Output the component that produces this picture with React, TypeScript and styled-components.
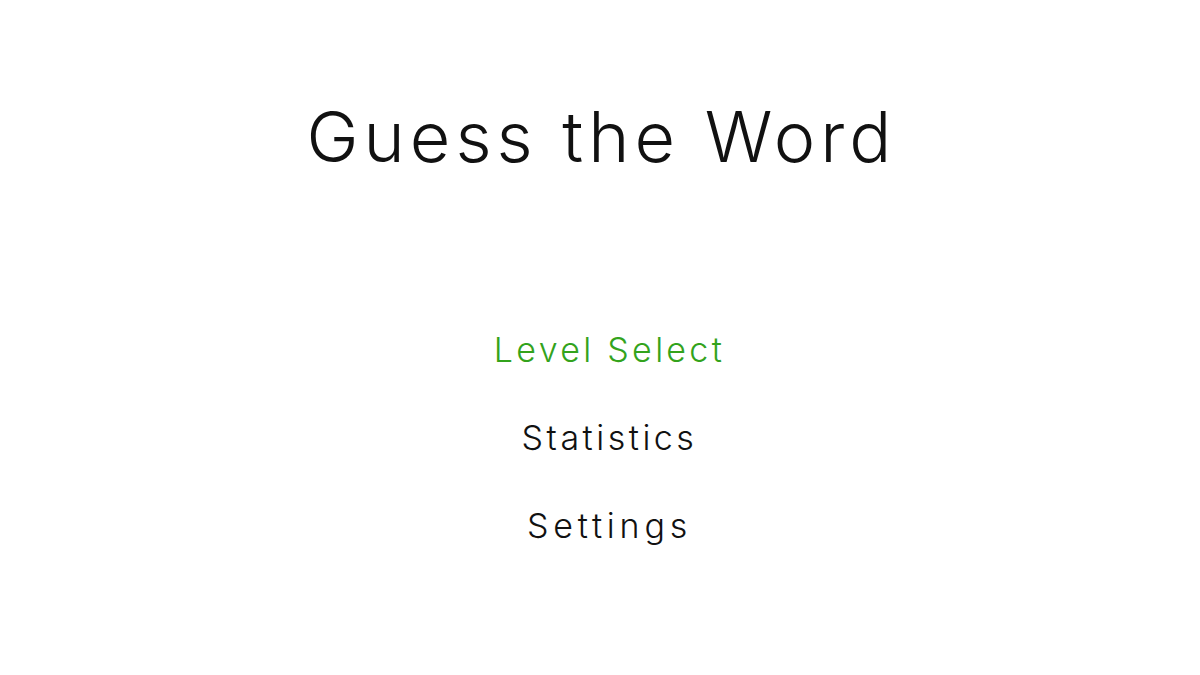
import React from "react";
import styled, { createGlobalStyle } from "styled-components";

const Global = createGlobalStyle`
  html, body {
    margin: 0;
    padding: 0;
    background: #ffffff;
  }
  body {
    font-family: Inter, "Open Sans", "Liberation Sans", sans-serif;
    font-weight: 300;
    color: #111111;
  }
`;

const Screen = styled.main`
  width: 1200px;
  height: 675px;
  display: flex;
  flex-direction: column;
  align-items: center;
  padding-top: 102px;
  box-sizing: border-box;
`;

const Title = styled.h1`
  margin: 0;
  padding-left: 3px;
  font-family: Inter, "Open Sans", "Liberation Sans", sans-serif;
  font-weight: 300;
  font-size: 70px;
  line-height: 70px;
  letter-spacing: 5px;
  color: #111111;
`;

const Menu = styled.nav`
  margin-top: 134px;
  padding-left: 19px;
  display: flex;
  flex-direction: column;
  align-items: center;
`;

const MenuItem = styled.button<{ $active?: boolean; $spacing: number }>`
  background: none;
  border: none;
  padding: 0;
  cursor: pointer;
  font-family: Inter, "Open Sans", "Liberation Sans", sans-serif;
  font-weight: 300;
  font-size: 34px;
  line-height: 88px;
  letter-spacing: ${(p) => p.$spacing}px;
  color: ${(p) => (p.$active ? "#33a31c" : "#111111")};
`;

export default function App() {
  return (
    <>
      <Global />
      <Screen>
        <Title>Guess the Word</Title>
        <Menu>
          <MenuItem $active $spacing={3.3}>Level Select</MenuItem>
          <MenuItem $spacing={3.5}>Statistics</MenuItem>
          <MenuItem $spacing={4.8}>Settings</MenuItem>
        </Menu>
      </Screen>
    </>
  );
}
